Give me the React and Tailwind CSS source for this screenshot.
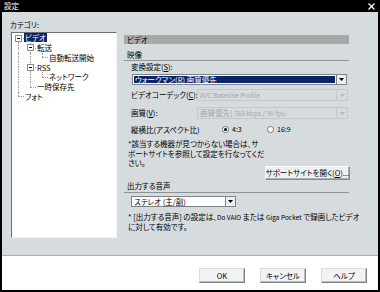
import React from 'react';

const tree = [
  { cells: ['expDown'], label: 'ビデオ', selected: true },
  { cells: ['vert', 'expBoth'], label: '転送' },
  { cells: ['vert', 'vert', 'elbow'], label: '自動転送開始' },
  { cells: ['vert', 'expBoth'], label: 'RSS' },
  { cells: ['vert', 'vert', 'elbow'], label: 'ネットワーク' },
  { cells: ['vert', 'elbow'], label: '一時保存先' },
  { cells: ['elbow'], label: 'フォト' },
];

const Arrow = ({ dim }) => (
  <svg width="5" height="3" viewBox="0 0 5 3">
    <path d="M0 0h5L2.5 3z" fill={dim ? '#b4b9bc' : '#000'} />
  </svg>
);

const TreeCell = ({ kind }) => {
  const hasTop = kind !== 'expDown';
  const hasBottom = kind === 'vert' || kind === 'expBoth' || kind === 'expDown';
  const hasRight = kind !== 'vert';
  const isExp = kind === 'expBoth' || kind === 'expDown';
  return (
    <div className="relative w-[12px] h-full shrink-0">
      {hasTop && <div className="absolute left-[6px] top-0 h-1/2 border-l border-dotted border-[#9a9a9a]" />}
      {hasBottom && <div className="absolute left-[6px] top-1/2 bottom-0 border-l border-dotted border-[#9a9a9a]" />}
      {hasRight && <div className="absolute left-[6px] right-0 top-1/2 border-t border-dotted border-[#9a9a9a]" />}
      {isExp && (
        <div className="absolute left-[3px] top-[1.5px] w-[7px] h-[7px] bg-white border border-[#8c8c8c] flex items-center justify-center">
          <div className="w-[3px] h-px bg-black" />
        </div>
      )}
    </div>
  );
};

const DisabledSelect = ({ children, className }) => (
  <div className={`h-[12px] flex border border-[#c2c8cb] ${className}`}>
    <div className="flex-1 flex items-center pl-[2px] text-[#a3a8ab] whitespace-nowrap overflow-hidden">{children}</div>
    <div className="w-[11px] flex items-center justify-center border-l border-[#c2c8cb]">
      <Arrow dim />
    </div>
  </div>
);

const Radio = ({ checked }) => (
  <div className="w-[7px] h-[7px] rounded-full bg-white border border-[#6f7477] flex items-center justify-center">
    {checked && <div className="w-[3px] h-[3px] rounded-full bg-black" />}
  </div>
);

const App = () => {
  return (
    <div className="w-[380px] h-[292px] bg-black flex flex-col text-[7.5px] leading-none text-black font-['Noto_Sans_CJK_JP',sans-serif] [font-feature-settings:'palt']">
      {/* title bar */}
      <div className="h-[12px] flex items-center justify-between pl-[4px] pr-[5px] text-white">
        <span>設定</span>
        <svg width="7" height="7" viewBox="0 0 7 7">
          <path d="M0.5 0.5L6.5 6.5M6.5 0.5L0.5 6.5" stroke="#fff" strokeWidth="1.2" />
        </svg>
      </div>

      <div className="flex-1 ml-[2px] mr-[2px] mb-[2px] flex flex-col bg-white">
        {/* main area */}
        <div className="h-[244px] bg-[#d6dbde] flex border-b border-[#a2b3b7]">
          {/* category tree */}
          <div className="ml-[9px] w-[106px] pt-[9px] flex flex-col">
            <div className="h-[11px] pl-[-1px] -ml-[1px]">カテゴリ:</div>
            <div className="h-[206px] bg-white border-t border-l border-[#6e6e6e] border-r border-b border-r-[#f4f4f4] border-b-[#f4f4f4]">
              {tree.map((row) => (
                <div key={row.label} className="flex h-[9.75px] items-center">
                  {row.cells.map((c, i) => (
                    <TreeCell key={i} kind={c} />
                  ))}
                  <span
                    className={
                      row.selected
                        ? 'bg-[#0a246a] text-white px-[1px] leading-[9px] whitespace-nowrap'
                        : 'pl-[1px] leading-[9px] whitespace-nowrap'
                    }
                  >
                    {row.label}
                  </span>
                </div>
              ))}
            </div>
          </div>

          {/* settings panel */}
          <div className="ml-[7px] w-[225px] pt-[23px] flex flex-col">
            <div className="h-[9px] bg-[#a9a9a9] pl-[3px] leading-[9px]">ビデオ</div>

            <div className="mt-[6px] h-[11px] pl-[3px] border-b border-[#8b9396] leading-[9px]">映像</div>

            <div className="mt-[1px] h-[10px] pl-[7px] flex items-center">
              変換設定(<span className="underline">S</span>):
            </div>

            <div className="mt-[2px] ml-[8px] w-[215px] h-[11px] flex border border-[#7d8387] bg-white">
              <div className="flex-1 m-px bg-[#0a246a] text-white flex items-center pl-[1px]">
                ウォークマン(R) 画質優先
              </div>
              <div className="w-[10px] flex items-center justify-center bg-[#eceeef] border-l border-[#7d8387]">
                <Arrow />
              </div>
            </div>

            <div className="mt-[4px] h-[12px] flex items-center">
              <div className="w-[73px] pl-[7px] whitespace-nowrap">
                ビデオコーデック(<span className="underline">C</span>):
              </div>
              <DisabledSelect className="w-[151px]">
                <span className="text-[6.5px]">AVC Baseline Profile</span>
              </DisabledSelect>
            </div>

            <div className="mt-[6px] h-[12px] flex items-center">
              <div className="w-[73px] pl-[7px] whitespace-nowrap">
                画質(<span className="underline">V</span>):
              </div>
              <DisabledSelect className="w-[151px]">
                画質優先(<span className="text-[6.5px]">&nbsp;768 kbps / 30 fps)</span>
              </DisabledSelect>
            </div>

            <div className="mt-[5px] h-[11px] flex items-center">
              <div className="w-[98px] pl-[7px] whitespace-nowrap">縦横比(アスペクト比)</div>
              <div className="w-[45px] flex items-center gap-[3px]">
                <Radio checked />
                <span className="text-[7px]">4:3</span>
              </div>
              <div className="flex items-center gap-[3px]">
                <Radio />
                <span className="text-[7px]">16:9</span>
              </div>
            </div>

            <div className="mt-[4px] h-[41px] flex justify-between">
              <div className="pl-[4px] leading-[9.5px] whitespace-nowrap self-start">
                *該当する機器が見つからない場合は、サ
                <br />
                ポートサイトを参照して設定を行なってくだ
                <br />
                さい。
              </div>
              <div className="self-end mr-px w-[86px] h-[14px] flex items-center justify-center bg-[#eef0f1] border border-[#868c90] border-l-[#fbfbfb] border-t-[#fbfbfb] shadow-[inset_-1px_-1px_0_#a9aeb1] whitespace-nowrap">
                サポートサイトを開く(<span className="underline">O</span>)...
              </div>
            </div>

            <div className="mt-px h-[12px] pl-[3px] border-b border-[#8b9396] leading-[10px]">出力する音声</div>

            <div className="mt-[3px] ml-[7px] w-[105px] h-[11px] flex border border-[#7d8387] bg-white">
              <div className="flex-1 flex items-center pl-[2px]">ステレオ (主/副)</div>
              <div className="w-[10px] flex items-center justify-center bg-[#eceeef] border-l border-[#7d8387]">
                <Arrow />
              </div>
            </div>

            <div className="mt-[5px] pl-[4px] leading-[9px] whitespace-nowrap">
              * [出力する音声] の設定は、<span className="text-[6.5px]">Do VAIO</span> または{' '}
              <span className="text-[6.5px]">Giga Pocket</span> で録画したビデオ
              <br />
              に対して有効です。
            </div>
          </div>
        </div>

        {/* footer buttons */}
        <div className="flex-1 bg-white flex justify-end items-start pt-[12px] pr-[11px] gap-[15px]">
          {['OK', 'キャンセル', 'ヘルプ'].map((b) => (
            <div
              key={b}
              className="w-[46px] h-[15px] flex items-center justify-center bg-[#f2f3f4] border border-[#7e8488] border-l-[#d8dadb] border-t-[#d8dadb] shadow-[inset_-1px_-1px_0_#b8bcbf]"
            >
              {b}
            </div>
          ))}
        </div>
      </div>
    </div>
  );
};

export default App;
